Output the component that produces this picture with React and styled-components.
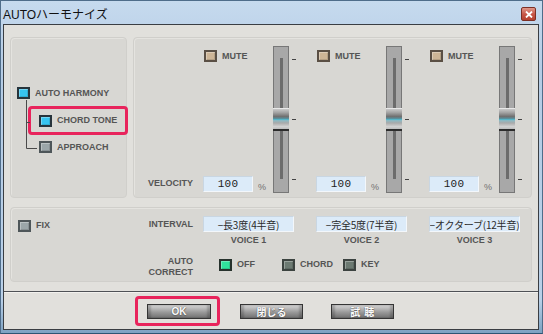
import React from "react";
import styled, { createGlobalStyle } from "styled-components";

const Global = createGlobalStyle`
  html, body { margin: 0; padding: 0; background: #ffffff; }
  body { font-family: "Liberation Sans", Arial, sans-serif; }
`;

const CHECK = {
  cyan: { frame: "#27343c", fill: "#37c4f0" },
  grey: { frame: "#4e5659", fill: "#9ba6a9" },
  tan: { frame: "#5a4f44", fill: "#cdb596" },
  green: { frame: "#27322d", fill: "#30e29c" },
  dark: { frame: "#3c4340", fill: "#6c7a72" },
};

const Window = styled.div`
  width: 543px;
  height: 334px;
  box-sizing: border-box;
  border: 1px solid #4f6d8a;
  border-bottom-color: #2d5573;
  background: linear-gradient(#c6daee, #b5cce5 20%, #b9d0e8 90%, #7da2c2);
  display: flex;
  flex-direction: column;
`;

const TitleBar = styled.div`
  height: 23px;
  flex: none;
  display: flex;
  align-items: center;
  justify-content: space-between;
  padding: 0 6px 0 2px;
`;

const Title = styled.span`
  font-family: "Liberation Sans", "Noto Sans CJK JP", sans-serif;
  font-size: 12px;
  color: #101010;
  margin-top: 1px;
`;

const CloseBtn = styled.div`
  width: 15px;
  height: 14px;
  margin-top: 3px;
  box-sizing: border-box;
  border: 1px solid #7c2f25;
  border-radius: 2px;
  background: linear-gradient(#e0988a, #c8584a 50%, #b5402f);
  display: flex;
  align-items: center;
  justify-content: center;
`;

const Body = styled.div`
  margin: 0 3px 3px 2px;
  flex: 1;
  border: 1px solid #3a3e43;
  background: #e1e0dc;
  display: flex;
  flex-direction: column;
`;

const Content = styled.div`
  padding: 12px 6px 0;
  display: flex;
  flex-direction: column;
  gap: 9px;
`;

const TopRow = styled.div`
  display: flex;
  gap: 6px;
  height: 161px;
`;

const Panel = styled.div`
  box-sizing: border-box;
  background: #d8d7d3;
  border: 1px solid #d0cfcb;
  border-radius: 4px;
  box-shadow: inset 1px 1px 0 #e4e3df;
`;

const LeftPanel = styled(Panel)`
  width: 117px;
  position: relative;
  padding: 49px 0 0 6px;
  display: flex;
  flex-direction: column;
  align-items: flex-start;
`;

const TreeLines = styled.svg`
  position: absolute;
  left: 0;
  top: 0;
  pointer-events: none;
`;

const Label = styled.span`
  font-family: "Liberation Sans", Arial, sans-serif;
  font-weight: bold;
  font-size: 9px;
  line-height: 11px;
  color: ${(p) => p.$color || "#555555"};
  white-space: nowrap;
`;

const CheckItem = styled.div`
  display: flex;
  align-items: center;
  gap: ${(p) => (p.$gap ?? 5)}px;
  width: ${(p) => (p.$w ? `${p.$w}px` : "auto")};
  margin-left: ${(p) => p.$ml || 0}px;
  margin-top: ${(p) => p.$mt || 0}px;
  flex: none;
`;

const Check = styled.span`
  display: block;
  width: 13px;
  height: 12px;
  box-sizing: border-box;
  flex: none;
  border: 2px solid ${(p) => CHECK[p.$kind].frame};
  background: ${(p) => CHECK[p.$kind].fill};
  box-shadow: inset 1px 1px 0 rgba(255, 255, 255, 0.3), inset -1px -1px 0 rgba(0, 0, 0, 0.12);
`;

const Highlight = styled.div`
  box-sizing: border-box;
  border: 3px solid #e8245c;
  border-radius: 4px;
  display: flex;
  align-items: center;
`;

const TreeHighlight = styled(Highlight)`
  width: 100px;
  height: 29px;
  margin: 7px 0 0 11px;
  padding-left: 8px;
`;

const RightPanel = styled(Panel)`
  flex: 1;
  display: flex;
  padding: 8px 0 4px 14px;
`;

const SideLabel = styled.div`
  width: 51px;
  display: flex;
  flex-direction: column;
  justify-content: flex-end;
  padding-bottom: 4px;
`;

const Voices = styled.div`
  display: flex;
  gap: 13px;
`;

const Voice = styled.div`
  width: 100px;
  display: flex;
`;

const Controls = styled.div`
  width: 74px;
  box-sizing: border-box;
  padding: 4px 0 1px 4px;
  display: flex;
  flex-direction: column;
  justify-content: space-between;
`;

const VelocityRow = styled.div`
  display: flex;
  align-items: flex-end;
  gap: 5px;
`;

const ValueBox = styled.div`
  width: ${(p) => p.$w}px;
  height: 16px;
  box-sizing: border-box;
  background: #dcebf9;
  border: 1px solid #f3f7fb;
  border-top-color: #c9d6e2;
  border-left-color: #c9d6e2;
  display: flex;
  align-items: center;
  justify-content: center;
  color: #222;
  white-space: nowrap;
  overflow: hidden;
`;

const Mono = styled.span`
  font-family: "Liberation Mono", "DejaVu Sans Mono", monospace;
  font-size: 11px;
  letter-spacing: 0.2px;
`;

const Jp = styled.span`
  font-family: "Noto Sans CJK JP", sans-serif;
  font-size: 10px;
  letter-spacing: -0.2px;
  color: #2a2a2a;
`;

const Percent = styled.span`
  font-family: "Liberation Sans", Arial, sans-serif;
  font-size: 9px;
  color: #707070;
  line-height: 11px;
  margin-bottom: -1px;
`;

const SliderWrap = styled.div`
  display: flex;
  gap: 3px;
`;

const Track = styled.div`
  width: 16px;
  height: 147px;
  box-sizing: border-box;
  background: #a8a8a8;
  border: 1px solid #777;
  display: flex;
  flex-direction: column;
  align-items: center;
  padding-top: 11px;
`;

const Groove = styled.div`
  width: 3px;
  height: ${(p) => p.$h}px;
  background: #6c6c6c;
`;

const Thumb = styled.div`
  width: 16px;
  height: 23px;
  flex: none;
  box-sizing: border-box;
  border-top: 1px solid #e8e8e8;
  border-bottom: 2px solid #2c2c2c;
  background: linear-gradient(
    #c9c9c9 0%,
    #a3a3a3 18%,
    #6f6f6f 38%,
    #5a8f9c 48%,
    #55b8cc 53%,
    #8fb9c2 58%,
    #a9a9a9 70%,
    #d2d2d2 88%,
    #bdbdbd 100%
  );
`;

const Ticks = styled.div`
  height: 147px;
  box-sizing: border-box;
  padding: 13px 0;
  display: flex;
  flex-direction: column;
  justify-content: space-between;
`;

const Tick = styled.div`
  width: 4px;
  height: 1px;
  background: #444;
`;

const BottomPanel = styled(Panel)`
  height: 75px;
  display: grid;
  grid-template-columns: 185px 113px 113px 1fr;
  grid-template-rows: 16px 11px 24px;
  row-gap: 3px;
  padding: 8px 0 0 7px;
  align-content: start;
`;

const IntervalCell = styled.div`
  display: flex;
  align-items: center;
  justify-content: space-between;
  padding-right: 10px;
`;

const VoiceCell = styled.div`
  width: 91px;
  display: flex;
  justify-content: center;
`;

const CorrectLabel = styled.div`
  grid-column: 1;
  margin-top: 7px;
  padding-right: 10px;
  display: flex;
  flex-direction: column;
  align-items: flex-end;
  line-height: 12px;
`;

const CorrectOptions = styled.div`
  grid-column: 2 / 5;
  margin-top: 7px;
  padding-left: 16px;
  display: flex;
  align-items: center;
`;

const Footer = styled.div`
  margin-top: 9px;
  flex: 1;
  border-top: 1px solid #4e5156;
  box-shadow: inset 0 1px 0 #f2f1ee;
  display: flex;
  align-items: center;
  padding: 1px 0 0 131px;
`;

const OkHighlight = styled(Highlight)`
  width: 85px;
  height: 30px;
  padding: 0 0 0 9px;
  margin-right: 20px;
`;

const Btn = styled.div`
  width: ${(p) => p.$w}px;
  height: 15px;
  box-sizing: border-box;
  border: 1px solid #353535;
  margin-right: ${(p) => p.$mr || 0}px;
  background: linear-gradient(#d6d6d6 0%, #bcbcbc 25%, #9a9a9a 55%, #838383 80%, #737373 100%);
  box-shadow: inset 3px 0 2px rgba(0,0,0,0.18), inset -3px 0 2px rgba(0,0,0,0.18);
  display: flex;
  align-items: center;
  justify-content: center;
  font-family: "Liberation Sans", "Noto Sans CJK JP", sans-serif;
  font-weight: bold;
  font-size: 10px;
  color: #fbfbfb;
  text-shadow: 0 0 1px #555, 0 1px 1px #666;
  letter-spacing: ${(p) => p.$ls || 0}px;
`;

function Option({ kind, label, w, ml, mt, gap }) {
  return (
    <CheckItem $w={w} $ml={ml} $mt={mt} $gap={gap}>
      <Check $kind={kind} />
      <Label>{label}</Label>
    </CheckItem>
  );
}

function Slider() {
  return (
    <SliderWrap>
      <Track>
        <Groove $h={50} />
        <Thumb />
        <Groove $h={48} />
      </Track>
      <Ticks>
        <Tick />
        <Tick />
        <Tick />
      </Ticks>
    </SliderWrap>
  );
}

const voices = [
  { name: "VOICE 1", interval: "−長3度(4半音)" },
  { name: "VOICE 2", interval: "−完全5度(7半音)" },
  { name: "VOICE 3", interval: "−オクターブ(12半音)" },
];

export default function App() {
  return (
    <>
      <Global />
      <Window>
        <TitleBar>
          <Title>AUTOハーモナイズ</Title>
          <CloseBtn>
            <svg width="8" height="7" viewBox="0 0 8 7">
              <path d="M1 0.5 L7 6.5 M7 0.5 L1 6.5" stroke="#fff" strokeWidth="1.8" />
            </svg>
          </CloseBtn>
        </TitleBar>
        <Body>
          <Content>
            <TopRow>
              <LeftPanel>
                <TreeLines width="40" height="120">
                  <path d="M15.5 62 V110.5 M15.5 84.5 H19 M15.5 110.5 H26" stroke="#4a4a4a" strokeWidth="1" fill="none" />
                </TreeLines>
                <Option kind="cyan" label="AUTO HARMONY" />
                <TreeHighlight>
                  <Option kind="cyan" label="CHORD TONE" />
                </TreeHighlight>
                <Option kind="grey" label="APPROACH" ml={22} mt={6} />
              </LeftPanel>
              <RightPanel>
                <SideLabel>
                  <Label>VELOCITY</Label>
                </SideLabel>
                <Voices>
                  {voices.map((v) => (
                    <Voice key={v.name}>
                      <Controls>
                        <Option kind="tan" label="MUTE" ml={1} gap={5} />
                        <VelocityRow>
                          <ValueBox $w={50}>
                            <Mono>100</Mono>
                          </ValueBox>
                          <Percent>%</Percent>
                        </VelocityRow>
                      </Controls>
                      <Slider />
                    </Voice>
                  ))}
                </Voices>
              </RightPanel>
            </TopRow>
            <BottomPanel>
              <IntervalCell>
                <Option kind="grey" label="FIX" mt={3} />
                <Label>INTERVAL</Label>
              </IntervalCell>
              {voices.map((v) => (
                <VoiceCell key={v.name + "i"}>
                  <ValueBox $w={91}>
                    <Jp>{v.interval}</Jp>
                  </ValueBox>
                </VoiceCell>
              ))}
              <div />
              {voices.map((v) => (
                <VoiceCell key={v.name + "l"}>
                  <Label>{v.name}</Label>
                </VoiceCell>
              ))}
              <CorrectLabel>
                <Label>AUTO</Label>
                <Label>CORRECT</Label>
              </CorrectLabel>
              <CorrectOptions>
                <Option kind="green" label="OFF" w={63} />
                <Option kind="dark" label="CHORD" w={61} />
                <Option kind="dark" label="KEY" />
              </CorrectOptions>
            </BottomPanel>
          </Content>
          <Footer>
            <OkHighlight>
              <Btn $w={64}>OK</Btn>
            </OkHighlight>
            <Btn $w={63} $mr={28}>閉じる</Btn>
            <Btn $w={63} $ls={0.5}>試 聴</Btn>
          </Footer>
        </Body>
      </Window>
    </>
  );
}
